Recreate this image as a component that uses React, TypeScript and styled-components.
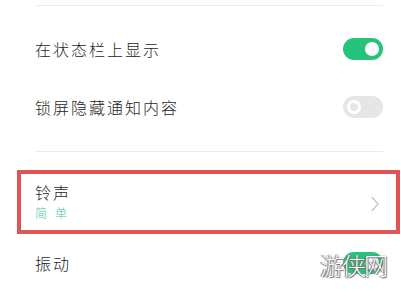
import React from "react";
import styled, { createGlobalStyle } from "styled-components";

const GlobalStyle = createGlobalStyle`
  html, body {
    margin: 0;
    padding: 0;
    background: #ffffff;
  }
  body {
    font-family: "Noto Sans CJK SC", "Noto Sans", sans-serif;
    width: 401px;
    height: 304px;
    overflow: hidden;
  }
`;

const Page = styled.div`
  position: relative;
  width: 401px;
  height: 304px;
  display: flex;
  flex-direction: column;
`;

const Divider = styled.div<{ $top?: number }>`
  height: 1px;
  background: #ececec;
  margin: ${(p) => p.$top ?? 0}px 18px 0 35px;
`;

const Section = styled.div`
  display: flex;
  flex-direction: column;
  padding: 14px 0 15px;
`;

const Row = styled.div`
  height: 58px;
  display: flex;
  align-items: center;
  justify-content: space-between;
  padding: 0 18px 0 35px;
`;

const Label = styled.span`
  font-size: 16px;
  font-weight: 300;
  letter-spacing: 2px;
  color: #1e1e1e;
`;

const Toggle = styled.span<{ $on: boolean }>`
  position: relative;
  width: 40px;
  height: 22px;
  border-radius: 11px;
  background: ${(p) => (p.$on ? "#27c37a" : "#e6e6e6")};
  flex-shrink: 0;

  &::after {
    content: "";
    position: absolute;
    top: 4px;
    left: ${(p) => (p.$on ? "22px" : "4px")};
    width: 14px;
    height: 14px;
    border-radius: 50%;
    box-sizing: border-box;
    background: ${(p) => (p.$on ? "#ffffff" : "#e6e6e6")};
    border: ${(p) => (p.$on ? "none" : "3px solid #ffffff")};
  }
`;

const Highlight = styled.div`
  margin: 18px 1px 0 17px;
  height: 64px;
  box-sizing: border-box;
  border: 4px solid #e05454;
  display: flex;
  align-items: center;
  justify-content: space-between;
  padding: 0 17px 0 14px;
`;

const TextStack = styled.div`
  display: flex;
  flex-direction: column;
  gap: 0;
  margin-top: -2px;
`;

const Sub = styled.span`
  font-size: 12px;
  font-weight: 300;
  letter-spacing: 8px;
  line-height: 18px;
  color: #4cc794;
`;

const Chevron = styled.svg`
  width: 8px;
  height: 16px;
  margin-top: 3px;
`;

const Watermark = styled.span`
  position: absolute;
  left: 320px;
  top: 247px;
  font-family: "Noto Sans CJK SC", serif;
  font-size: 24px;
  font-weight: 300;
  letter-spacing: -2px;
  color: #ffffff;
  text-shadow: 0 0 1px #555, 1px 1px 1px #777, -1px 0 1px #777;
`;

export default function App() {
  return (
    <>
      <GlobalStyle />
      <Page>
        <Divider $top={5} />
        <Section>
          <Row>
            <Label>在状态栏上显示</Label>
            <Toggle $on />
          </Row>
          <Row>
            <Label>锁屏隐藏通知内容</Label>
            <Toggle $on={false} />
          </Row>
        </Section>
        <Divider />
        <Highlight>
          <TextStack>
            <Label>铃声</Label>
            <Sub>简单</Sub>
          </TextStack>
          <Chevron viewBox="0 0 8 16">
            <polyline
              points="1,1 7,8 1,15"
              fill="none"
              stroke="#c4c4c4"
              strokeWidth="1.2"
            />
          </Chevron>
        </Highlight>
        <Row>
          <Label>振动</Label>
          <Toggle $on />
        </Row>
        <Watermark>游侠网</Watermark>
      </Page>
    </>
  );
}
